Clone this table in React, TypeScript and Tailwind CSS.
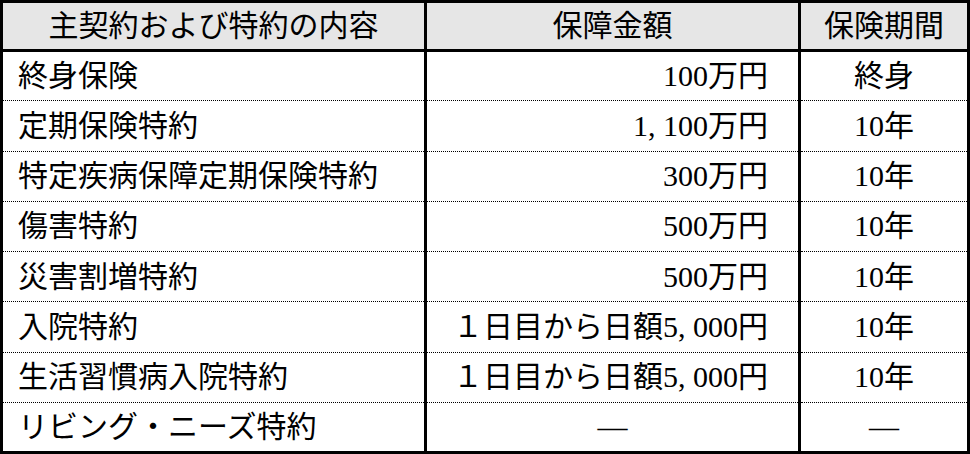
const rows = [
  { name: "終身保険", amount: "100万円", term: "終身" },
  { name: "定期保険特約", amount: "1,100万円", term: "10年" },
  { name: "特定疾病保障定期保険特約", amount: "300万円", term: "10年" },
  { name: "傷害特約", amount: "500万円", term: "10年" },
  { name: "災害割増特約", amount: "500万円", term: "10年" },
  { name: "入院特約", amount: "１日目から日額5,000円", term: "10年" },
  { name: "生活習慣病入院特約", amount: "１日目から日額5,000円", term: "10年" },
  { name: "リビング・ニーズ特約", amount: null, term: null },
]

// Mincho-style half-width comma is wider than the Latin one
function Amount({ text }: { text: string }) {
  const parts = text.split(",")
  return (
    <>
      {parts.map((p, i) => (
        <span key={i}>
          {p}
          {i < parts.length - 1 && <span className="inline-block w-[15px] text-left">,</span>}
        </span>
      ))}
    </>
  )
}

export default function App() {
  return (
    <div className="w-[970px] h-[454px] bg-white font-['Liberation_Serif','Noto_Sans_CJK_JP',serif] text-[30px] leading-none text-black">
      <table className="w-[970px] h-[454px] border-collapse table-fixed border-[3px] border-black">
        <colgroup>
          <col className="w-[424px]" />
          <col className="w-[374px]" />
          <col />
        </colgroup>
        <thead>
          <tr className="h-[49px] bg-[#e6e6e6]">
            <th className="font-normal text-center border-r-[3px] border-b-[3px] border-black p-0">
              主契約および特約の内容
            </th>
            <th className="font-normal text-center border-r-[3px] border-b-[3px] border-black p-0">保障金額</th>
            <th className="font-normal text-center border-b-[3px] border-black p-0">保険期間</th>
          </tr>
        </thead>
        <tbody>
          {rows.map((row) => (
            <tr key={row.name} className="h-[50px] border-b border-dotted border-black last:border-b-0">
              <td className="border-r-[3px] border-black pl-[15px] pr-0 py-0 text-left">{row.name}</td>
              <td
                className={`border-r-[3px] border-black py-0 pl-0 ${
                  row.amount ? "text-right pr-[30px]" : "text-center pr-0"
                }`}
              >
                {row.amount ? <Amount text={row.amount} /> : "―"}
              </td>
              <td className="text-center p-0">{row.term ?? "―"}</td>
            </tr>
          ))}
        </tbody>
      </table>
    </div>
  )
}
